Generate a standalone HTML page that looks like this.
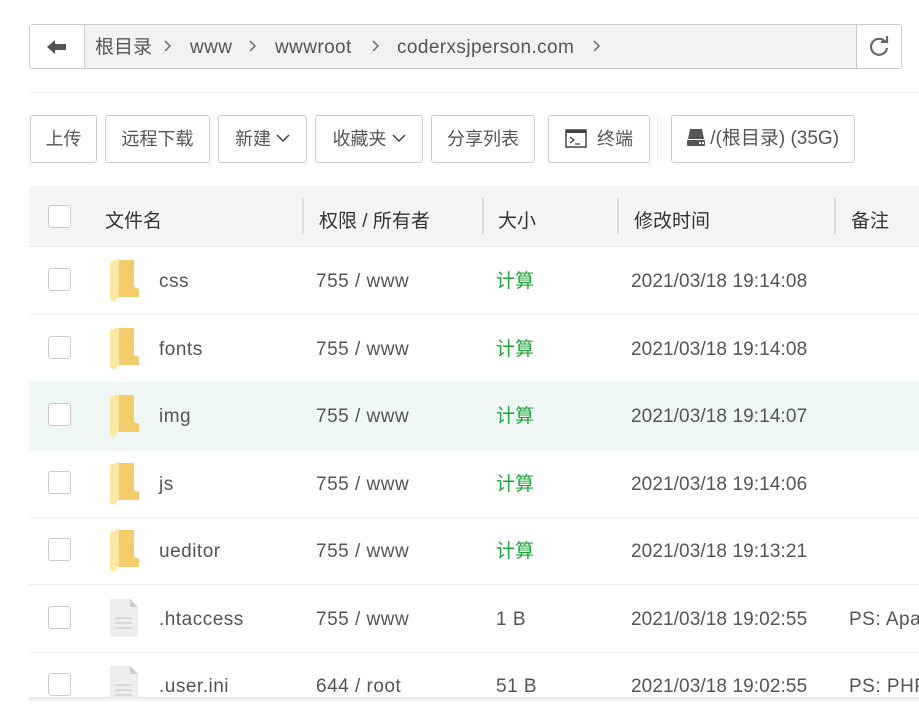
<!DOCTYPE html><html><head><meta charset="utf-8"><style>
body{margin:0;width:919px;height:711px;overflow:hidden;background:#fff;font-family:"Liberation Sans","Noto Sans CJK SC",sans-serif;color:#555;position:relative}
.a{position:absolute}
.crumb{left:29px;top:24px;width:871px;height:43px;border:1px solid #ccc;border-radius:3px;background:#f2f2f2}
.back{left:0;top:0;width:54px;height:43px;background:#fff;border-right:1px solid #ccc}
.ref{right:0;top:0;width:44px;height:43px;background:#fff;border-left:1px solid #ccc}
.ct{top:12px;font-size:19px;letter-spacing:.4px;color:#555;white-space:nowrap;line-height:22px}
.btn{top:115px;border:1px solid #ccc;border-radius:3px;font-size:18px;line-height:46px;text-align:center;color:#555;box-sizing:border-box;height:48px}
.hdr{left:29px;top:186px;width:890px;height:60px;background:#f5f5f5;border-bottom:1px solid #e6e6e6}
.cb{width:23px;height:23px;border:1px solid #ccc;border-radius:3px;background:#fff;box-sizing:border-box}
.sep{top:198px;width:2px;height:36px;background:#ddd}
.ht{top:206px;font-size:19px;color:#333}
.row{left:29px;width:890px;height:67px;border-bottom:1px solid #eee}
.t{font-size:19px;letter-spacing:.5px;color:#555;white-space:nowrap;line-height:22px;margin-top:4px}
.d{letter-spacing:.1px}
.g{color:#20a53a;letter-spacing:0;margin-top:4px}
</style></head><body>
<div class="a crumb">
 <div class="a back"><svg class="a" style="left:17px;top:14px" width="20" height="16" viewBox="0 0 20 16"><path d="M0 8 L8 1 V5 H19 V11 H8 V15 Z" fill="#555"/></svg></div>
 <div class="a ct" style="left:65px;top:12px;letter-spacing:0">根目录</div>
 <svg class="a" style="left:134px;top:15px" width="8" height="12"><path d="M1 1 L6 6 L1 11" fill="none" stroke="#777" stroke-width="1.6"/></svg>
 <div class="a ct" style="left:160px">www</div>
 <svg class="a" style="left:219px;top:15px" width="8" height="12"><path d="M1 1 L6 6 L1 11" fill="none" stroke="#777" stroke-width="1.6"/></svg>
 <div class="a ct" style="left:245px">wwwroot</div>
 <svg class="a" style="left:342px;top:15px" width="8" height="12"><path d="M1 1 L6 6 L1 11" fill="none" stroke="#777" stroke-width="1.6"/></svg>
 <div class="a ct" style="left:367px">coderxsjperson.com</div>
 <svg class="a" style="left:563px;top:15px" width="8" height="12"><path d="M1 1 L6 6 L1 11" fill="none" stroke="#777" stroke-width="1.6"/></svg>
 <div class="a ref"><svg class="a" style="left:11px;top:11px" width="22" height="22" viewBox="0 0 22 22"><path d="M17.5 6 A8 8 0 1 0 19 12" fill="none" stroke="#666" stroke-width="2.2"/><path d="M13 6 H19 V0" fill="none" stroke="#666" stroke-width="2.2"/></svg></div>
</div>
<div class="a" style="left:29px;top:92px;width:890px;height:1px;background:#eee"></div>
<div class="a btn" style="left:30px;width:67px">上传</div>
<div class="a btn" style="left:105px;width:105px">远程下载</div>
<div class="a btn" style="left:218px;width:89px">新建 <svg width="14" height="9" style="vertical-align:2px"><path d="M1 1 L7 7 L13 1" fill="none" stroke="#444" stroke-width="1.5"/></svg></div>
<div class="a btn" style="left:315px;width:108px">收藏夹 <svg width="14" height="9" style="vertical-align:2px"><path d="M1 1 L7 7 L13 1" fill="none" stroke="#444" stroke-width="1.5"/></svg></div>
<div class="a btn" style="left:431px;width:104px">分享列表</div>
<div class="a btn" style="left:548px;width:102px"><svg style="vertical-align:-3px" width="22" height="19" viewBox="0 0 22 19"><rect x="1" y="1" width="20" height="17" fill="none" stroke="#444" stroke-width="1.5"/><rect x="1" y="1" width="20" height="3" fill="#444"/><path d="M5 8 L9 11 L5 14" fill="none" stroke="#444" stroke-width="1.3"/><path d="M10 15 H15" stroke="#444" stroke-width="1.3"/></svg>&nbsp; 终端</div>
<div class="a" style="left:657px;top:116px;width:1px;height:46px;background:#eee"></div>
<div class="a btn" style="left:671px;width:184px;font-size:19px"><svg style="vertical-align:-2px" width="18" height="17" viewBox="0 0 18 17"><path d="M3 0 H15 L17 10 H1 Z" fill="#555"/><rect x="0" y="11" width="18" height="6" rx="1" fill="#555"/><rect x="12" y="13" width="2" height="2" fill="#fff"/><rect x="15" y="13" width="2" height="2" fill="#fff"/></svg> /(根目录) (35G)</div>
<div class="a hdr"></div>
<div class="a cb" style="left:48px;top:205px"></div>
<div class="a ht" style="left:105px">文件名</div>
<div class="a sep" style="left:302px"></div><div class="a ht" style="left:319px">权限 / 所有者</div>
<div class="a sep" style="left:482px"></div><div class="a ht" style="left:498px">大小</div>
<div class="a sep" style="left:617px"></div><div class="a ht" style="left:634px">修改时间</div>
<div class="a sep" style="left:834px"></div><div class="a ht" style="left:851px">备注</div>

<div class="a row" style="top:247px"></div>
<div class="a row" style="top:315px"></div>
<div class="a row" style="top:382px;background:#eff8f5"></div>
<div class="a row" style="top:450px"></div>
<div class="a row" style="top:517px"></div>
<div class="a row" style="top:585px"></div>

<div class="a cb" style="left:48px;top:268px"></div>
<div class="a cb" style="left:48px;top:336px"></div>
<div class="a cb" style="left:48px;top:403px"></div>
<div class="a cb" style="left:48px;top:471px"></div>
<div class="a cb" style="left:48px;top:538px"></div>
<div class="a cb" style="left:48px;top:606px"></div>
<div class="a cb" style="left:48px;top:673px"></div>

<svg class="a" style="left:109px;top:259px" width="30" height="43" viewBox="0 0 30 43"><path d="M6 1 H25 V28 L30 30 V38 H6 Z" fill="#f3cd6c"/><path d="M1 3 L10 0 V36 L6 43 L1 41 Z" fill="#fde7a2"/></svg>
<svg class="a" style="left:109px;top:327px" width="30" height="43" viewBox="0 0 30 43"><path d="M6 1 H25 V28 L30 30 V38 H6 Z" fill="#f3cd6c"/><path d="M1 3 L10 0 V36 L6 43 L1 41 Z" fill="#fde7a2"/></svg>
<svg class="a" style="left:109px;top:394px" width="30" height="43" viewBox="0 0 30 43"><path d="M6 1 H25 V28 L30 30 V38 H6 Z" fill="#f3cd6c"/><path d="M1 3 L10 0 V36 L6 43 L1 41 Z" fill="#fde7a2"/></svg>
<svg class="a" style="left:109px;top:462px" width="30" height="43" viewBox="0 0 30 43"><path d="M6 1 H25 V28 L30 30 V38 H6 Z" fill="#f3cd6c"/><path d="M1 3 L10 0 V36 L6 43 L1 41 Z" fill="#fde7a2"/></svg>
<svg class="a" style="left:109px;top:529px" width="30" height="43" viewBox="0 0 30 43"><path d="M6 1 H25 V28 L30 30 V38 H6 Z" fill="#f3cd6c"/><path d="M1 3 L10 0 V36 L6 43 L1 41 Z" fill="#fde7a2"/></svg>
<svg class="a" style="left:110px;top:599px" width="28" height="38" viewBox="0 0 28 38"><path d="M0 0 H20 L28 8 V38 H0 Z" fill="#eee"/><path d="M20 0 L28 8 H20 Z" fill="#ccc"/><path d="M5 19 H22 M5 24 H22 M5 29 H22" stroke="#ccc" stroke-width="1.2"/></svg>
<svg class="a" style="left:110px;top:666px" width="28" height="38" viewBox="0 0 28 38"><path d="M0 0 H20 L28 8 V38 H0 Z" fill="#eee"/><path d="M20 0 L28 8 H20 Z" fill="#ccc"/><path d="M5 19 H22 M5 24 H22 M5 29 H22" stroke="#ccc" stroke-width="1.2"/></svg>

<div class="a t" style="left:159px;top:267px">css</div><div class="a t" style="left:316px;top:267px">755 / www</div><div class="a t g" style="left:496px;top:267px">计算</div><div class="a t d" style="left:631px;top:267px">2021/03/18 19:14:08</div>
<div class="a t" style="left:159px;top:335px">fonts</div><div class="a t" style="left:316px;top:335px">755 / www</div><div class="a t g" style="left:496px;top:335px">计算</div><div class="a t d" style="left:631px;top:335px">2021/03/18 19:14:08</div>
<div class="a t" style="left:159px;top:402px">img</div><div class="a t" style="left:316px;top:402px">755 / www</div><div class="a t g" style="left:496px;top:402px">计算</div><div class="a t d" style="left:631px;top:402px">2021/03/18 19:14:07</div>
<div class="a t" style="left:159px;top:470px">js</div><div class="a t" style="left:316px;top:470px">755 / www</div><div class="a t g" style="left:496px;top:470px">计算</div><div class="a t d" style="left:631px;top:470px">2021/03/18 19:14:06</div>
<div class="a t" style="left:159px;top:537px">ueditor</div><div class="a t" style="left:316px;top:537px">755 / www</div><div class="a t g" style="left:496px;top:537px">计算</div><div class="a t d" style="left:631px;top:537px">2021/03/18 19:13:21</div>
<div class="a t" style="left:159px;top:605px">.htaccess</div><div class="a t" style="left:316px;top:605px">755 / www</div><div class="a t" style="left:496px;top:605px">1 B</div><div class="a t d" style="left:631px;top:605px">2021/03/18 19:02:55</div><div class="a t" style="left:849px;top:605px">PS: Apache</div>
<div class="a t" style="left:159px;top:672px">.user.ini</div><div class="a t" style="left:316px;top:672px">644 / root</div><div class="a t" style="left:496px;top:672px">51 B</div><div class="a t d" style="left:631px;top:672px">2021/03/18 19:02:55</div><div class="a t" style="left:849px;top:672px">PS: PHP</div>
<div class="a" style="left:29px;top:697px;width:890px;height:14px;background:linear-gradient(#e8e8e8,#fff 40%)"></div>
</body></html>
